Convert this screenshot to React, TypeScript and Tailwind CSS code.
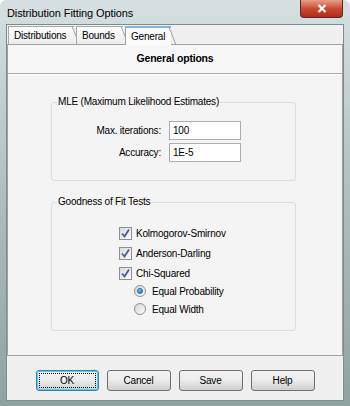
import React from 'react';

const font = { fontFamily: '"Liberation Sans", Arial, sans-serif' };

function Tab({ label, active, width }: { label: string; active?: boolean; width: string }) {
  return (
    <div
      className={
        'relative flex h-[18px] items-center pl-[5px] text-[10px] tracking-[-0.2px] text-black ' +
        width +
        (active
          ? ' z-10 -mb-px h-[19px] border-t-2 border-t-[#7eb4ea] border-l border-l-[#a0a0a0] bg-[#fbfbfb]'
          : ' mt-[1px] border-t border-l border-[#a8a8a8] bg-gradient-to-b from-[#fdfdfd] to-[#ececec]')
      }
    >
      {label}
      <svg className="absolute -right-[6px] top-[-1px] h-[19px] w-[8px]" viewBox="0 0 8 19">
        <path d="M0 0 L7 18" stroke="#a0a0a0" strokeWidth="1" fill="none" />
      </svg>
    </div>
  );
}

function Check({ label }: { label: string }) {
  return (
    <div className="flex h-[20px] items-center gap-[4px]">
      <div className="flex h-[13px] w-[13px] items-center justify-center border border-[#8e8f8f] bg-gradient-to-br from-[#dcdcdc] to-[#fbfbfb]">
        <svg viewBox="0 0 11 11" className="h-[11px] w-[11px]">
          <path d="M2 5.5 L4.5 8.5 L9 1.5" stroke="#4a5f97" strokeWidth="1.8" fill="none" />
        </svg>
      </div>
      <span>{label}</span>
    </div>
  );
}

function Radio({ label, checked }: { label: string; checked?: boolean }) {
  return (
    <div className="flex h-[18px] items-center gap-[6px]">
      <div className="flex h-[12px] w-[12px] items-center justify-center rounded-full border border-[#8e8f8f] bg-gradient-to-br from-[#d8d8d8] to-[#fafafa]">
        {checked && (
          <div className="h-[6px] w-[6px] rounded-full border border-[#1b5f9f] bg-gradient-to-br from-[#8fd3ff] to-[#1e74c8]" />
        )}
      </div>
      <span>{label}</span>
    </div>
  );
}

function Button({ label, focused }: { label: string; focused?: boolean }) {
  return (
    <button
      type="button"
      className={
        'flex h-[21px] items-center justify-center rounded-[3px] border bg-gradient-to-b from-[#f2f2f2] via-[#ebebeb] to-[#cfcfcf] text-[10px] tracking-[-0.2px] text-black ' +
        (focused ? 'w-[63px] border-[#3c7fb1] shadow-[inset_0_0_0_1px_#48d0ff]' : 'w-[64px] border-[#707070]')
      }
    >
      <span
        className={
          focused
            ? 'flex h-[15px] w-[57px] items-center justify-center border border-dotted border-black'
            : ''
        }
      >
        {label}
      </span>
    </button>
  );
}

export default function App() {
  return (
    <div
      style={font}
      className="flex h-[406px] w-[350px] flex-col rounded-t-[6px] bg-gradient-to-b from-[#d6e0e2] via-[#aebdbd] to-[#8ea3a0]"
    >
      {/* title bar */}
      <div className="flex h-[24px] items-start">
        <div className="pl-[7px] pt-[5px] text-[11px] tracking-[-0.1px] text-black">Distribution Fitting Options</div>
        <div className="ml-auto mr-[7px] flex h-[18px] w-[43px] items-center justify-center rounded-b-[4px] border border-t-0 border-[#5a2a22] bg-gradient-to-b from-[#e59e8c] via-[#cc4a32] to-[#b32a14]">
          <svg viewBox="0 0 10 9" className="h-[9px] w-[10px]">
            <path d="M1.5 1 L8.5 8 M8.5 1 L1.5 8" stroke="white" strokeWidth="2.2" />
          </svg>
        </div>
      </div>

      {/* client area */}
      <div className="mx-[6px] flex flex-1 flex-col border border-[#7c8c90] bg-[#f0f0f0]">
        <div className="flex h-[19px] items-end gap-[2px] pl-px pt-[2px]">
          <Tab label="Distributions" width="w-[66px]" />
          <Tab label="Bounds" width="w-[47px]" />
          <Tab label="General" active width="w-[46px]" />
        </div>

        <div className="flex h-[312px] flex-col border border-[#a0a0a0] bg-[#f4f4f4] text-[10px] tracking-[-0.2px] text-black">
          <div className="flex h-[29px] items-center justify-center border-b border-[#a9a9a9] bg-[#f7f7f7] text-[10.5px] font-bold">
            General options
          </div>
          <div className="h-px bg-white" />

          <fieldset className="ml-[43px] mt-[21px] w-[245px] rounded-[3px] border border-[#d5dfe5] pb-[18px]">
            <legend className="ml-[5px] px-[1px] leading-[12px]">MLE (Maximum Likelihood Estimates)</legend>
            <div className="mt-[13px] grid grid-cols-[109px_72px] items-center gap-x-[8px] gap-y-[3px]">
              <span className="text-right">Max. iterations:</span>
              <div className="flex h-[19px] items-center border border-[#abadb3] bg-white pl-[3px]">100</div>
              <span className="text-right">Accuracy:</span>
              <div className="flex h-[19px] items-center border border-[#abadb3] bg-white pl-[3px]">1E-5</div>
            </div>
          </fieldset>

          <fieldset className="ml-[43px] mt-[15px] w-[245px] rounded-[3px] border border-[#d5dfe5] pb-[12px]">
            <legend className="ml-[5px] px-[1px] leading-[12px]">Goodness of Fit Tests</legend>
            <div className="ml-[67px] mt-[15px] flex flex-col">
              <Check label="Kolmogorov-Smirnov" />
              <Check label="Anderson-Darling" />
              <Check label="Chi-Squared" />
              <div className="-mt-[1px] ml-[15px] flex flex-col">
                <Radio label="Equal Probability" checked />
                <Radio label="Equal Width" />
              </div>
            </div>
          </fieldset>
        </div>

        <div className="flex flex-1 justify-center gap-[8px] pt-[14px]">
          <Button label="OK" focused />
          <Button label="Cancel" />
          <Button label="Save" />
          <Button label="Help" />
        </div>
      </div>
      <div className="h-[5px]" />
    </div>
  );
}
